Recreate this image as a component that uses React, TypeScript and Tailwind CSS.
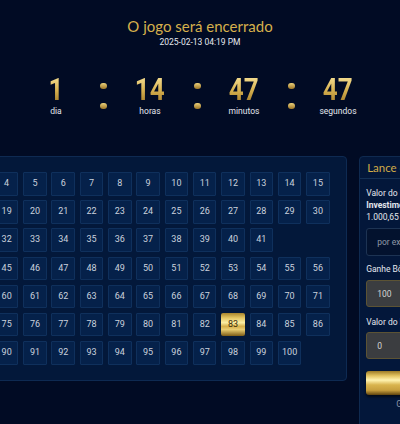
const UNITS = [
  { value: "1", label: "dia" },
  { value: "14", label: "horas" },
  { value: "47", label: "minutos" },
  { value: "47", label: "segundos" },
];

const range = (a: number, b: number) => Array.from({ length: b - a + 1 }, (_, i) => a + i);

const ROWS: (number | null)[][] = [
  range(1, 15),
  range(16, 30),
  [null, null, 31, ...range(32, 41)],
  range(42, 56),
  range(57, 71),
  range(72, 86),
  range(87, 100),
];

const SELECTED = 83;

function Dot() {
  return <span className="block h-[6px] w-[7px] rounded-full bg-linear-to-b from-[#ecd27a] to-[#9c7524]" />;
}

function Countdown() {
  return (
    <div className="mt-[27px] flex pl-[32.5px]">
      {UNITS.map((u, i) => (
        <div key={i} className="flex">
          {i > 0 && (
            <div className="flex w-[47px] flex-col items-center gap-[14px] pt-[8px]">
              <Dot />
              <Dot />
            </div>
          )}
          <div className="flex w-[47px] flex-col items-center">
            <span className="inline-block scale-x-[0.84] bg-linear-to-b from-[#f8e49a] via-[#d9b452] to-[#a27a26] bg-clip-text text-[31px] font-bold leading-[29px] text-transparent">
              {u.value}
            </span>
            <span className="mt-[2px] text-[8.5px] leading-[10px] text-[#e4e7ee]">{u.label}</span>
          </div>
        </div>
      ))}
    </div>
  );
}

function NumberGrid() {
  return (
    <div className="shrink-0 rounded-[4px] border border-[#0e2a52] bg-[#03183a] py-[15px] pl-[15px] pr-[16.5px]">
      <div className="grid grid-cols-[repeat(15,23.5px)] gap-x-[4.8px] gap-y-[4.7px]">
        {ROWS.flatMap((row, r) => {
          const cells = [...row];
          while (cells.length < 15) cells.push(null);
          return cells.map((n, c) =>
            n === null ? (
              <div key={`${r}-${c}`} className="h-[23.5px] w-[23.5px]" />
            ) : n === SELECTED ? (
              <div
                key={`${r}-${c}`}
                className="flex h-[23.5px] w-[23.5px] items-center justify-center rounded-[2px] bg-[linear-gradient(180deg,#a8842c_0%,#e6c865_22%,#fbeea4_42%,#d5ae4a_58%,#e9cd72_72%,#7c5b16_100%)] text-[9px] text-[#3a2a08]"
              >
                {n}
              </div>
            ) : (
              <div
                key={`${r}-${c}`}
                className="flex h-[23.5px] w-[23.5px] items-center justify-center rounded-[1px] border border-[#0f305c] bg-[#05214a] text-[9px] text-[#cbd2dd]"
              >
                {n}
              </div>
            )
          );
        })}
      </div>
    </div>
  );
}

function BetPanel() {
  return (
    <div className="h-[300px] w-[260px] shrink-0 rounded-[4px] border border-[#0f2a50] bg-[#03173a]">
      <div className="flex h-[22px] items-center border-b border-[#143055] px-[7px] font-['Lato',sans-serif] text-[11.5px] text-[#d2ac48]">
        Lance de aposta
      </div>
      <div className="px-[6px] pt-[8px] text-[8.5px] leading-[12px] text-[#e3e7ee]">
        <p>Valor do Ingresso: 1 bilhete</p>
        <p className="font-bold">Investimento total</p>
        <p>1.000,65 BRL</p>
        <div className="mt-[5px] flex h-[28px] items-center rounded-[3px] border border-[#1d3353] bg-[#03122e] pl-[10px] text-[#8f99a8]">
          por exemplo 100
        </div>
        <p className="mt-[7px]">Ganhe Bônus</p>
        <div className="mt-[5px] flex h-[27px] items-center rounded-[3px] border border-[#5c5334] bg-[#3b3d40] pl-[10px] text-[#d4d4d4]">
          100
        </div>
        <p className="mt-[9px]">Valor do bônus</p>
        <div className="mt-[4px] flex h-[27px] items-center rounded-[3px] border border-[#5c5334] bg-[#3b3d40] pl-[10px] text-[#d4d4d4]">
          0
        </div>
        <button className="mt-[12px] h-[24px] w-full rounded-[3px] bg-[linear-gradient(180deg,#9c7a26_0%,#e3c462_20%,#fff3b0_38%,#d9b44e_58%,#c79f3e_80%,#5e430e_100%)] text-[10px] font-bold text-[#2a1e05] shadow-[0_2px_3px_rgba(0,0,0,0.6)]">
          Apostar agora
        </button>
        <p className="mt-[3px] pl-[30px] text-[#8a93a3]">Gire para ganhar</p>
      </div>
    </div>
  );
}

export default function App() {
  return (
    <div className="h-[424px] w-full overflow-hidden bg-[#010b24] font-['Roboto',sans-serif]">
      <div className="pt-[16px] text-center">
        <h1 className="font-['Lato',sans-serif] text-[15px] leading-[20px] text-[#d6b04c]">O jogo será encerrado</h1>
        <p className="text-[8.5px] leading-[12px] text-[#e6e9ef]">2025-02-13 04:19 PM</p>
      </div>
      <Countdown />
      <div className="-ml-[106px] mt-[40px] flex items-start gap-3">
        <NumberGrid />
        <BetPanel />
      </div>
    </div>
  );
}
